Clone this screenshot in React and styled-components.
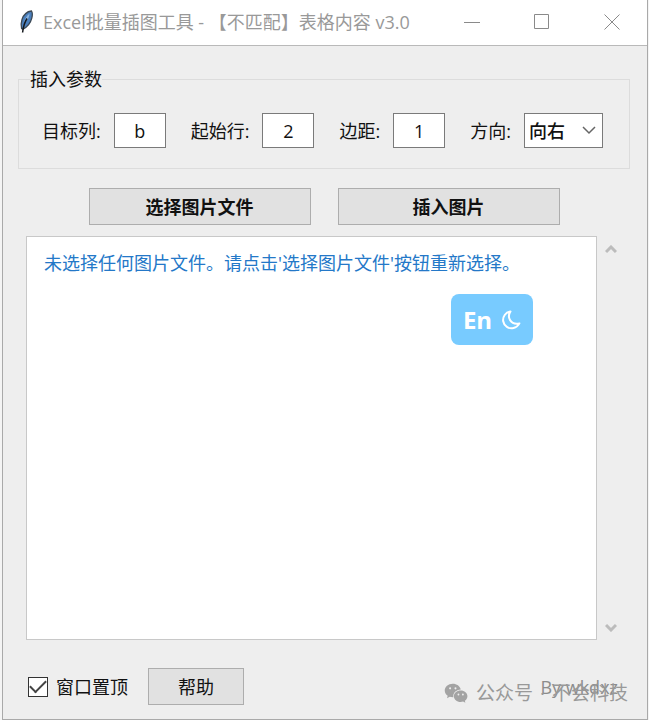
import React, { useState } from "react";
import styled, { createGlobalStyle } from "styled-components";

const FIELDS = [
  { id: "column", label: "目标列:", value: "b" },
  { id: "row", label: "起始行:", value: "2" },
  { id: "margin", label: "边距:", value: "1" },
];

const App = () => {
  const [onTop, setOnTop] = useState(true);

  return (
    <>
      <GlobalStyle />
      <Window>
        <TitleBar>
          <FeatherIcon />
          <Title>Excel批量插图工具 - 【不匹配】表格内容 v3.0</Title>
          <WindowButton aria-label="最小化">
            <svg width="16" height="16" stroke="currentColor" fill="none">
              <path d="M0 8.5h16" />
            </svg>
          </WindowButton>
          <WindowButton aria-label="最大化">
            <svg width="16" height="16" stroke="currentColor" fill="none">
              <path d="M.5.5h14v14H.5z" />
            </svg>
          </WindowButton>
          <WindowButton aria-label="关闭">
            <svg width="16" height="16" stroke="currentColor" fill="none">
              <path d="M.5.5l15 15M15.5.5l-15 15" />
            </svg>
          </WindowButton>
        </TitleBar>

        <Content>
          <Params>
            <legend>插入参数</legend>
            <FieldRow>
              {FIELDS.map(({ id, label, value }) => (
                <Field key={id}>
                  <label htmlFor={id}>{label}</label>
                  <TextInput id={id} defaultValue={value} />
                </Field>
              ))}
              <Field>
                <label htmlFor="direction">方向:</label>
                <SelectWrap>
                  <Select id="direction" defaultValue="向右">
                    <option>向右</option>
                    <option>向下</option>
                  </Select>
                  <SelectArrow width="14" height="9" viewBox="0 0 14 9">
                    <path d="M1 1l6 6 6-6" />
                  </SelectArrow>
                </SelectWrap>
              </Field>
            </FieldRow>
          </Params>

          <Actions>
            <Button $wide>选择图片文件</Button>
            <Button $wide>插入图片</Button>
          </Actions>

          <LogArea>
            <Log>未选择任何图片文件。请点击'选择图片文件'按钮重新选择。</Log>
            <ScrollBar>
              <ScrollButton aria-label="向上滚动">
                <svg width="12" height="9" viewBox="0 0 12 9">
                  <path d="M1 7l5-5 5 5" />
                </svg>
              </ScrollButton>
              <ScrollButton aria-label="向下滚动">
                <svg width="12" height="9" viewBox="0 0 12 9">
                  <path d="M1 2l5 5 5-5" />
                </svg>
              </ScrollButton>
            </ScrollBar>
            <ImeBadge>
              En
              <svg width="20" height="20" viewBox="0 0 20 20">
                <path d="M9.500 1.500C4.500 2.300 1.500 6.800 2.200 11.300c.9 5 5.500 7.700 10.300 6.700 2.600-.6 4.700-2.200 5.900-4.600-3.800.9-7.400-.3-9.300-3.300C7.400 7.400 7.700 4.200 9.500 1.500z" />
              </svg>
            </ImeBadge>
          </LogArea>

          <Footer>
            <CheckLabel>
              <CheckBox
                type="checkbox"
                checked={onTop}
                onChange={(e) => setOnTop(e.target.checked)}
              />
              窗口置顶
            </CheckLabel>
            <Button>帮助</Button>
            <Author>By wkdxz</Author>
            <Watermark>
              <WechatIcon />
              <span>公众号</span>
              <span>·</span>
              <span>不会科技</span>
            </Watermark>
          </Footer>
        </Content>
      </Window>
    </>
  );
};

export default App;

const FeatherIcon = () => (
  <svg width="16" height="24" viewBox="0 0 16 24">
    <path
      d="M12.500 1C8 1.500 4.500 5 3 9.500 2 12.800 1.800 16 2.600 18.600l1.400.6c4-2 7.500-6 8.800-11C13.500 5.300 13.500 2.500 12.500 1z"
      fill="#4a7fbd"
      stroke="#3c4854"
      strokeWidth="1.300"
    />
    <path d="M10.500 3.500C7.500 6 5.500 9.500 4.800 13l2-1.500C9 9.500 10.500 6.500 10.500 3.500z" fill="#8db4dc" />
    <path d="M8 8.500C5.800 12 4.300 16 3.600 22.500" fill="none" stroke="#14181d" strokeWidth="1.500" />
  </svg>
);

const WechatIcon = () => (
  <svg width="25" height="22" viewBox="0 0 27 22">
    <path
      d="M9.500 1C4.500 1 .8 4.300.8 8.300c0 2.300 1.200 4.300 3.200 5.600l-.8 2.700 3-1.600c1 .3 2.100.5 3.300.5h.7c-.9-4.300 2.900-8.300 7.900-8.300C17.300 3.600 13.700 1 9.500 1z"
      fill="#a3a3a3"
    />
    <path
      d="M18 8.200c-4.200 0-7.300 2.800-7.300 6.200 0 3.500 3.100 6.200 7.300 6.200.9 0 1.800-.1 2.600-.4l2.500 1.400-.6-2.300c1.700-1.100 2.800-2.900 2.800-4.900 0-3.400-3.100-6.200-7.300-6.200z"
      fill="#a3a3a3"
    />
    <g fill="#eee">
      <circle cx="6.600" cy="6" r="1.100" />
      <circle cx="12.400" cy="6" r="1.100" />
      <circle cx="15.600" cy="12.600" r="1" />
      <circle cx="20.400" cy="12.600" r="1" />
    </g>
  </svg>
);

const GlobalStyle = createGlobalStyle`
  * {
    box-sizing: border-box;
  }

  body {
    margin: 0;
    background: #f4f4f4;
  }

  body, button, input, select {
    font-family: "Open Sans", "Noto Sans CJK SC", sans-serif;
    font-size: 18px;
    line-height: 24px;
    color: #111;
  }
`;

const Window = styled.div`
  display: flex;
  flex-direction: column;
  min-height: 100vh;
  margin: 0 1px 0 2px;
  border: solid #a9a9a9;
  border-width: 0 1px 1px;
  background: #eee;
`;

const TitleBar = styled.header`
  display: flex;
  align-items: center;
  height: 46px;
  padding: 0 0 2px 16px;
  border-bottom: 1px solid #b9b9b9;
  background: #fff;
  color: #999;
`;

const Title = styled.h1`
  flex: 1;
  margin: 0 0 0 8px;
  font-size: 18px;
  font-weight: 400;
  white-space: nowrap;
`;

const WindowButton = styled.button`
  display: flex;
  align-items: center;
  justify-content: center;
  width: 70px;
  height: 44px;
  padding: 0;
  border: 0;
  background: none;
  color: #8a8a8a;
`;

const Content = styled.main`
  display: flex;
  flex: 1;
  flex-direction: column;
  padding: 21px 17px 14px 15px;
`;

const Params = styled.fieldset`
  min-width: 0;
  margin: 0;
  padding: 22px 23px 20px;
  border: 1px solid #dcdcdc;

  legend {
    margin-left: -12px;
    padding: 0;
  }
`;

const FieldRow = styled.div`
  display: flex;
  gap: 25px;
`;

const Field = styled.div`
  display: flex;
  align-items: center;
  gap: 13px;
  white-space: nowrap;
`;

const TextInput = styled.input`
  width: 52px;
  height: 35px;
  padding: 0;
  border: 1px solid #7a7a7a;
  border-radius: 0;
  background: #fff;
  text-align: center;
`;

const SelectWrap = styled.div`
  display: grid;
  align-items: center;

  > * {
    grid-area: 1 / 1;
  }
`;

const Select = styled.select`
  appearance: none;
  width: 79px;
  height: 35px;
  padding: 0 4px;
  border: 1px solid #7a7a7a;
  border-radius: 0;
  background: #fff;
  font-weight: 500;
`;

const SelectArrow = styled.svg`
  justify-self: end;
  margin-right: 7px;
  fill: none;
  stroke: #666;
  stroke-width: 1.5;
  pointer-events: none;
`;

const Actions = styled.div`
  display: flex;
  justify-content: center;
  gap: 27px;
  margin: 19px 0 11px;
`;

const Button = styled.button`
  width: ${({ $wide }) => ($wide ? "222px" : "96px")};
  height: 37px;
  padding: 0;
  border: 1px solid #adadad;
  background: #e1e1e1;
  font-weight: ${({ $wide }) => ($wide ? 700 : 400)};
`;

const LogArea = styled.section`
  position: relative;
  display: flex;
  flex: 1;
  margin-left: 8px;
`;

const Log = styled.div`
  flex: 1;
  padding: 14px 17px;
  border: 1px solid #c8c8c8;
  background: #fff;
  color: #2478c8;
`;

const ScrollBar = styled.div`
  display: flex;
  flex-direction: column;
  justify-content: space-between;
  width: 33px;
`;

const ScrollButton = styled.button`
  width: 27px;
  height: 26px;
  padding: 0;
  border: 0;
  background: none;
  line-height: 0;

  path {
    fill: none;
    stroke: #bcbcbc;
    stroke-width: 3;
  }
`;

const ImeBadge = styled.div`
  position: absolute;
  top: 58px;
  right: 97px;
  display: flex;
  align-items: center;
  justify-content: center;
  gap: 9px;
  width: 82px;
  height: 51px;
  border-radius: 8px;
  background: #78cbff;
  color: #fff;
  font-size: 24px;
  font-weight: 700;

  path {
    fill: none;
    stroke: #fff;
    stroke-width: 2;
    stroke-linejoin: round;
  }
`;

const Footer = styled.footer`
  position: relative;
  display: flex;
  align-items: center;
  gap: 20px;
  margin: 28px 12px 0 10px;
`;

const CheckLabel = styled.label`
  display: flex;
  align-items: center;
  gap: 8px;
`;

const CheckBox = styled.input`
  appearance: none;
  display: grid;
  place-items: center;
  width: 20px;
  height: 20px;
  margin: 0;
  border: 1px solid #333;
  background: #fff;

  &:checked::before {
    content: "";
    width: 14px;
    height: 7px;
    margin-bottom: 4px;
    border: solid #444;
    border-width: 0 0 2px 2px;
    transform: rotate(-45deg);
  }
`;

const Author = styled.span`
  margin-left: auto;
  color: #8c8c8c;
`;

/* account mark printed across the author line */
const Watermark = styled.div`
  position: absolute;
  right: -10px;
  bottom: 0;
  display: flex;
  align-items: center;
  gap: 7px;
  color: #999;
  font-size: 19px;
  white-space: nowrap;
`;
